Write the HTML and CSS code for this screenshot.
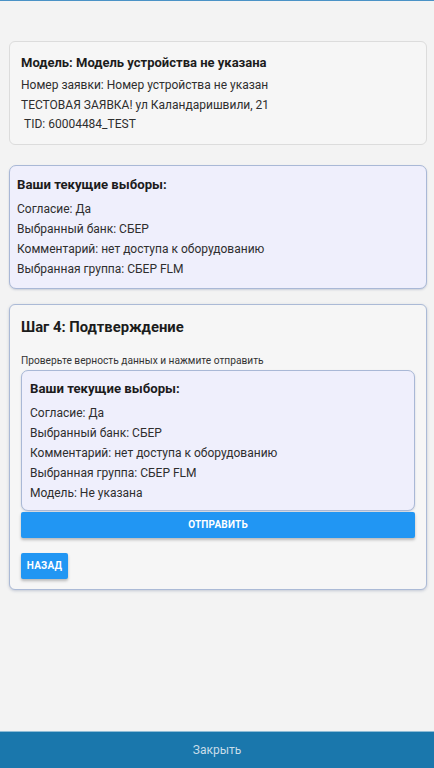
FILE: index.html
```html
<!DOCTYPE html>
<html lang="ru">
<head>
<meta charset="utf-8">
<title>Подтверждение</title>
<link rel="stylesheet" href="styles.css">
</head>
<body>
<div class="page">
  <div class="topline"></div>
  <main class="content">
    <section class="card info">
      <h2 class="info-title">Модель: Модель устройства не указана</h2>
      <p class="line">Номер заявки: Номер устройства не указан</p>
      <p class="line">ТЕСТОВАЯ ЗАЯВКА! ул Каландаришвили, 21</p>
      <p class="line">&nbsp;TID: 60004484_TEST</p>
    </section>

    <section class="choices outer">
      <h3 class="choices-title">Ваши текущие выборы:</h3>
      <p class="line">Согласие: Да</p>
      <p class="line">Выбранный банк: СБЕР</p>
      <p class="line">Комментарий: нет доступа к оборудованию</p>
      <p class="line">Выбранная группа: СБЕР FLM</p>
    </section>

    <section class="card step">
      <h2 class="step-title">Шаг 4: Подтверждение</h2>
      <p class="hint">Проверьте верность данных и нажмите отправить</p>
      <div class="choices inner">
        <h3 class="choices-title">Ваши текущие выборы:</h3>
        <p class="line">Согласие: Да</p>
        <p class="line">Выбранный банк: СБЕР</p>
        <p class="line">Комментарий: нет доступа к оборудованию</p>
        <p class="line">Выбранная группа: СБЕР FLM</p>
        <p class="line">Модель: Не указана</p>
      </div>
      <button class="btn btn-wide" type="button">Отправить</button>
      <button class="btn btn-back" type="button">Назад</button>
    </section>
  </main>
  <footer class="footer">Закрыть</footer>
</div>
</body>
</html>
```

FILE: styles.css
```css
* { box-sizing: border-box; }
html, body { margin: 0; padding: 0; }
body {
  background: #f3f3f3;
  font-family: Roboto, "Noto Sans", "Liberation Sans", sans-serif;
  color: #2a2a2a;
}
.page {
  min-height: 100vh;
  display: flex;
  flex-direction: column;
}
.topline {
  height: 1px;
  background: #4a92c6;
}
.content {
  flex: 1;
  padding: 40px 7px 0 9px;
  display: flex;
  flex-direction: column;
}
h2, h3, p { margin: 0; }
.line {
  font-size: 12px;
  line-height: 20px;
  color: #2e2e2e;
}
.card {
  background: #f6f6f6;
  border: 1px solid #dcdcdc;
  border-radius: 6px;
}
.info {
  padding: 12px 11px 9px;
}
.info-title {
  font-size: 13px;
  line-height: 18px;
  font-weight: 700;
  color: #1c1c1c;
  margin-bottom: 4px;
}
.info .line { line-height: 19.5px; }
.choices {
  background: #efeffc;
  border: 1px solid #a9b8d6;
  border-radius: 7px;
  box-shadow: 0 1px 2px rgba(80, 100, 140, 0.25);
}
.choices.outer {
  margin-top: 20px;
  padding: 9px 7px 9px;
}
.choices.inner {
  padding: 8px 8px 7px;
}
.choices-title {
  font-size: 13.2px;
  line-height: 20px;
  font-weight: 700;
  color: #1c1c1c;
  margin-bottom: 4px;
}
.step {
  margin-top: 15px;
  border-color: #abbad6;
  box-shadow: 0 1px 3px rgba(80, 100, 140, 0.3);
  padding: 12px 11px 10px;
  display: flex;
  flex-direction: column;
  align-items: flex-start;
}
.step-title {
  font-size: 14.8px;
  line-height: 20px;
  font-weight: 700;
  color: #1c1c1c;
  margin-bottom: 17px;
}
.hint {
  font-size: 10.2px;
  line-height: 14px;
  color: #333;
  margin-bottom: 2px;
}
.step .choices.inner { align-self: stretch; }
.btn {
  border: none;
  background: #2196f3;
  color: #fff;
  font-family: Roboto, "Noto Sans", "Liberation Sans", sans-serif;
  font-weight: 700;
  font-size: 10px;
  text-transform: uppercase;
  letter-spacing: 0.2px;
  border-radius: 2px;
  box-shadow: 0 2px 3px rgba(0, 0, 0, 0.25);
  padding: 0;
}
.btn-wide {
  align-self: stretch;
  height: 26px;
  margin-top: 1px;
}
.btn-back {
  margin-top: 15px;
  width: 47px;
  height: 26px;
}
.footer {
  height: 37px;
  background: #1a77ac;
  border-top: 1px solid #8fbcd6;
  color: #c9dde9;
  font-size: 12px;
  display: flex;
  align-items: center;
  justify-content: center;
}
```
